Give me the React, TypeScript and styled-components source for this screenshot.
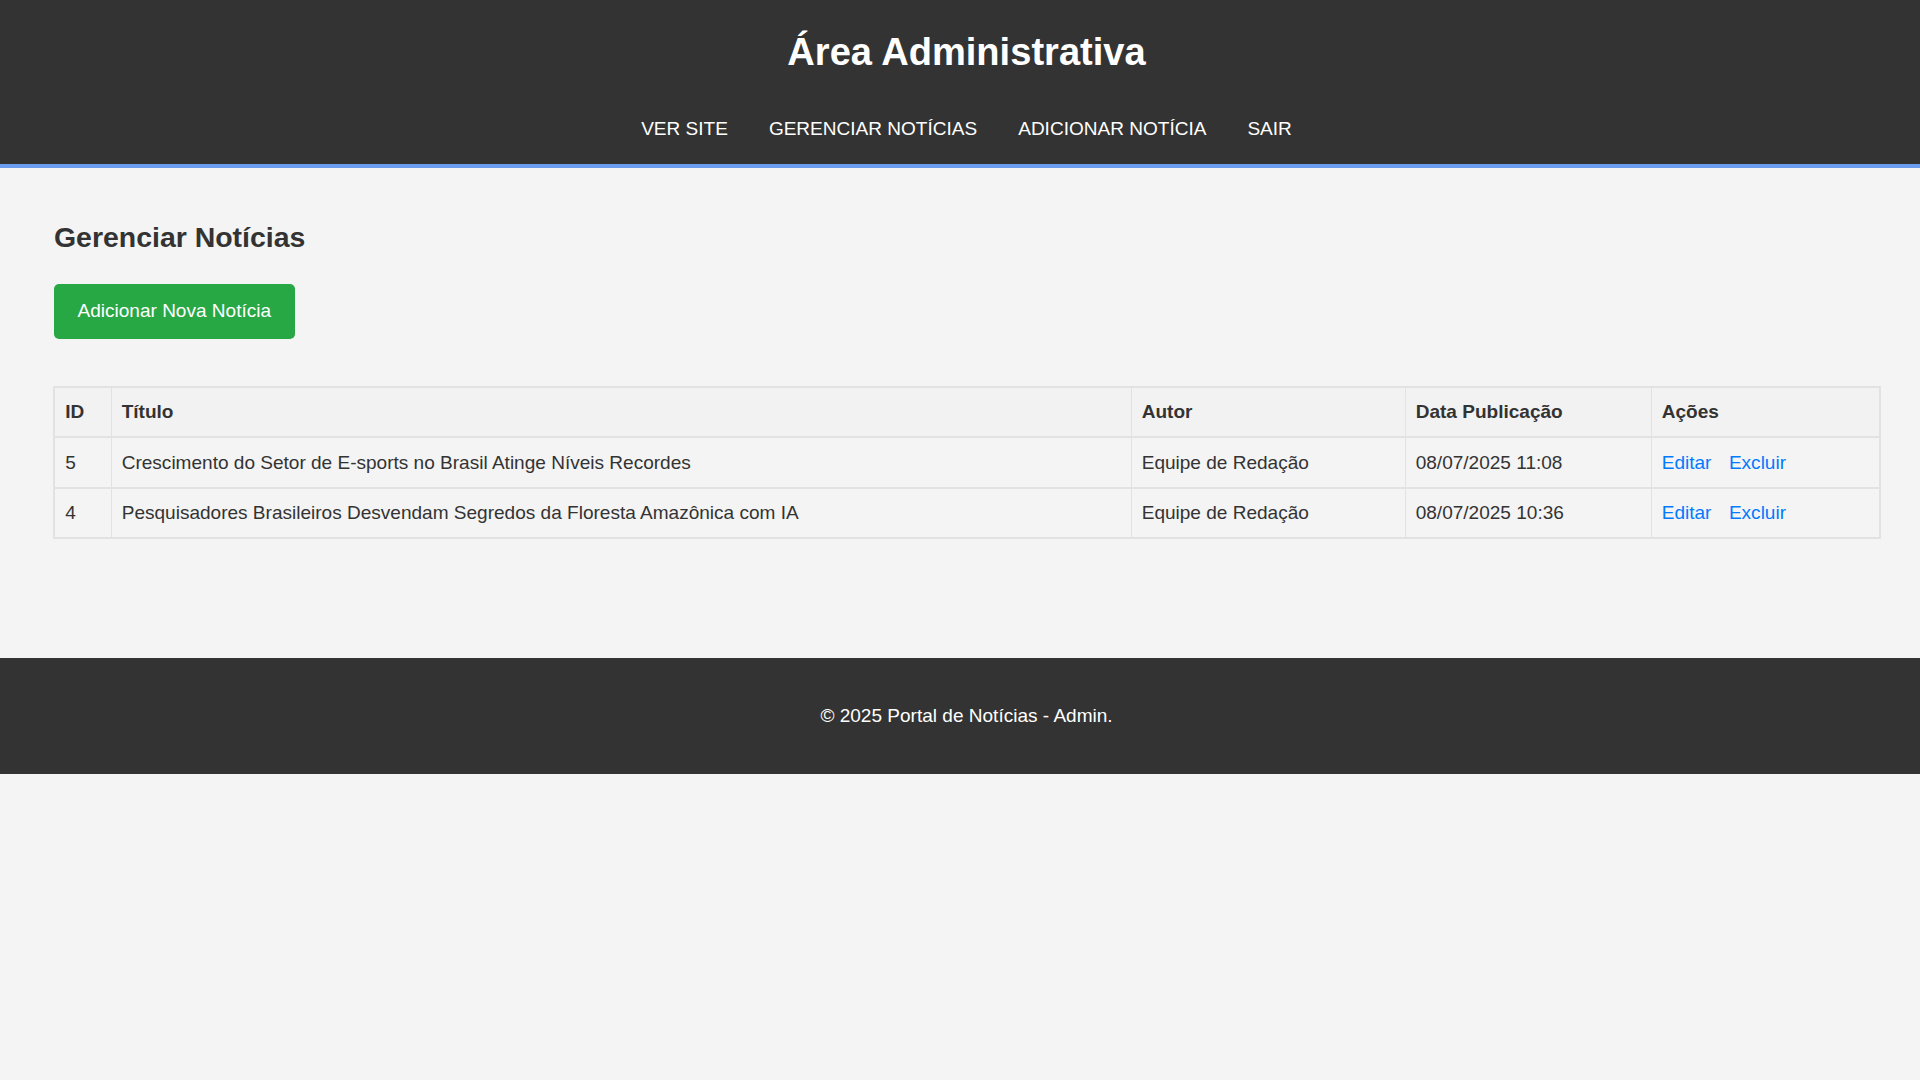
import React from "react";
import styled, { createGlobalStyle } from "styled-components";

const Global = createGlobalStyle`
  *, *::before, *::after { box-sizing: border-box; }
  html, body { margin: 0; padding: 0; }
  body {
    min-height: 1080px;
    background: #f4f4f4;
    color: #333;
    font-family: "Liberation Sans", Arial, sans-serif;
    font-size: 19.05px;
    line-height: 1.15;
  }
`;

const Header = styled.header`
  background: #333;
  border-bottom: 4px solid #6a9cf0;
  padding: 27px 0 0 13px;
  height: 168px;
  text-align: center;
  color: #fff;
`;
const Title = styled.h1`
  margin: 0;
  font-size: 38.1px;
  line-height: 50px;
  font-weight: 700;
`;
const Nav = styled.nav`
  display: flex;
  justify-content: center;
  gap: 41px;
  margin-top: 40px;
`;
const NavLink = styled.a`
  color: #fff;
  text-transform: uppercase;
  text-decoration: none;
  line-height: 24px;
`;
const Main = styled.main`
  height: 490px;
  padding: 0 40px 0 54px;
`;
const Heading = styled.h2`
  margin: 0;
  padding-top: 53px;
  font-size: 28.45px;
  line-height: 33px;
  font-weight: 700;
`;
const AddButton = styled.a`
  display: block;
  width: fit-content;
  margin-top: 30px;
  padding: 0 23.5px;
  height: 55px;
  line-height: 54px;
  background: #28a745;
  border-radius: 5px;
  color: #fff;
  text-decoration: none;
`;
const Table = styled.table`
  width: 100%;
  margin: 47px 0 0 -1px;
  border-collapse: collapse;
  table-layout: fixed;
  border: 2px solid #e2e2e2;
`;
const Th = styled.th`
  height: 50px;
  padding: 0 10.2px;
  border-style: solid;
  border-color: #e2e2e2;
  border-width: 2px 1px;
  background: #f2f2f2;
  text-align: left;
  font-weight: 700;
`;
const Td = styled.td<{ $first?: boolean }>`
  height: ${(p) => (p.$first ? 51 : 50)}px;
  padding: 0 10.2px;
  border-style: solid;
  border-color: #e2e2e2;
  border-width: 2px 1px;
`;
const ActionLink = styled.a<{ $last?: boolean }>`
  color: #007bff;
  text-decoration: none;
  margin-right: ${(p) => (p.$last ? 0 : 17.5)}px;
`;
const Footer = styled.footer`
  height: 116px;
  background: #333;
  color: #fff;
  padding-left: 13px;
  display: flex;
  align-items: center;
  justify-content: center;
`;

const links = ["Ver site", "Gerenciar Notícias", "Adicionar Notícia", "Sair"];
const columns = [
  { label: "ID", width: 57 },
  { label: "Título", width: 1020 },
  { label: "Autor", width: 274 },
  { label: "Data Publicação", width: 246 },
  { label: "Ações", width: 229 },
];
const rows = [
  { id: 5, title: "Crescimento do Setor de E-sports no Brasil Atinge Níveis Recordes", date: "08/07/2025 11:08" },
  { id: 4, title: "Pesquisadores Brasileiros Desvendam Segredos da Floresta Amazônica com IA", date: "08/07/2025 10:36" },
];

export default function App() {
  return (
    <>
      <Global />
      <Header>
        <Title>Área Administrativa</Title>
        <Nav>
          {links.map((l) => (
            <NavLink key={l} href="#">{l}</NavLink>
          ))}
        </Nav>
      </Header>
      <Main>
        <Heading>Gerenciar Notícias</Heading>
        <AddButton href="#">Adicionar Nova Notícia</AddButton>
        <Table>
          <colgroup>
            {columns.map((c) => (
              <col key={c.label} width={c.width} />
            ))}
          </colgroup>
          <thead>
            <tr>
              {columns.map((c) => (
                <Th key={c.label}>{c.label}</Th>
              ))}
            </tr>
          </thead>
          <tbody>
            {rows.map((r, i) => (
              <tr key={r.id}>
                <Td $first={i === 0}>{r.id}</Td>
                <Td $first={i === 0}>{r.title}</Td>
                <Td $first={i === 0}>Equipe de Redação</Td>
                <Td $first={i === 0}>{r.date}</Td>
                <Td $first={i === 0}>
                  <ActionLink href="#">Editar</ActionLink>
                  <ActionLink href="#" $last>Excluir</ActionLink>
                </Td>
              </tr>
            ))}
          </tbody>
        </Table>
      </Main>
      <Footer>© 2025 Portal de Notícias - Admin.</Footer>
    </>
  );
}
